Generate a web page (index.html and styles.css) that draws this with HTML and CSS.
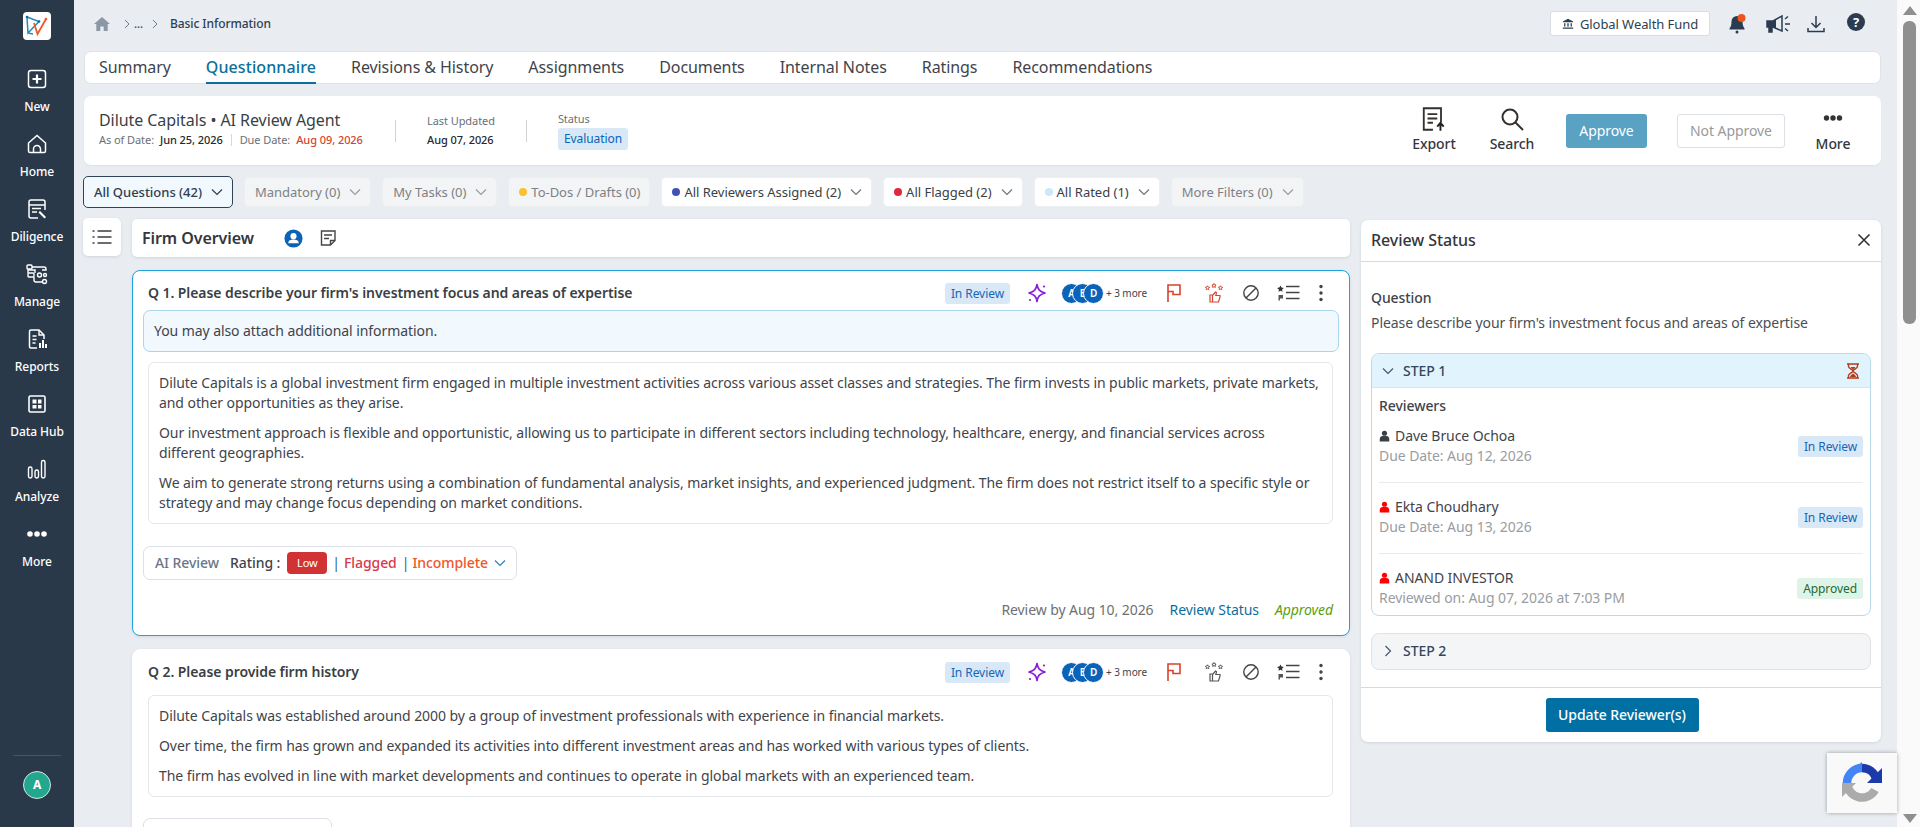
FILE: index.html
```html
<!DOCTYPE html>
<html lang="en">
<head>
<meta charset="utf-8">
<title>Basic Information</title>
<link rel="stylesheet" href="styles.css">
</head>
<body>
<svg class="defs" aria-hidden="true">
  <symbol id="chev" viewBox="0 0 12 8"><path d="M1 1.500l5 5 5-5" fill="none" stroke="currentColor" stroke-width="1.200"/></symbol>
  <symbol id="spark" viewBox="0 0 22 22"><path d="M11 2.500c.8 5 2.600 7 8 8.500-5.400 1.500-7.200 3.500-8 8.500-.8-5-2.600-7-8-8.500 5.400-1.500 7.200-3.500 8-8.500z" fill="none" stroke="#8a1fd6" stroke-width="1.700" stroke-linejoin="round"/><circle cx="18" cy="4.500" r="1.100" fill="#8a1fd6"/><circle cx="4" cy="18" r="1.100" fill="#8a1fd6"/></symbol>
  <symbol id="flag" viewBox="0 0 22 22"><path d="M5 20V3h12v9.500h-7V9.500H5" fill="none" stroke="currentColor" stroke-width="1.600"/></symbol>
  <symbol id="thumb" viewBox="0 0 22 22"><path d="M7 13h2.500v7H7zM9.500 13.500l3-3.500 1 .8-.7 2.700h4.200v1.500l-1.500 5h-6" fill="none" stroke="currentColor" stroke-width="1.200"/><path d="M4.500 3.800l.7 1.300 1.400.2-1 1 .2 1.400-1.300-.7-1.300.7.200-1.400-1-1 1.400-.2zM11 1.500l.7 1.300 1.400.2-1 1 .2 1.400-1.300-.7-1.300.7.200-1.400-1-1 1.400-.2zM17.500 3.800l.7 1.300 1.400.2-1 1 .2 1.400-1.300-.7-1.300.7.200-1.400-1-1 1.400-.2z" fill="none" stroke="currentColor" stroke-width="1"/></symbol>
  <symbol id="ban" viewBox="0 0 22 22"><circle cx="11" cy="11" r="7.200" fill="none" stroke="#444" stroke-width="1.400"/><path d="M6 16L16 6" stroke="#444" stroke-width="1.400"/></symbol>
  <symbol id="slist" viewBox="0 0 23 20"><path d="M3.500 2.500l1 2.100 2.300.3-1.700 1.600.4 2.300-2-1.100-2 1.100.4-2.300L0 4.900l2.300-.3z" fill="#333"/><path d="M1.500 12h4.500v3.500H3v2H1.500z" fill="#555"/><path d="M9 3.500h13.500M9 9.500h13.500M9 15.500h13.500" stroke="#444" stroke-width="1.500"/></symbol>
  <symbol id="dots" viewBox="0 0 22 22"><circle cx="11" cy="4.500" r="1.700" fill="#444"/><circle cx="11" cy="11" r="1.700" fill="#444"/><circle cx="11" cy="17.500" r="1.700" fill="#444"/></symbol>
  <symbol id="person" viewBox="0 0 12 12"><circle cx="6" cy="3" r="2.800" fill="currentColor"/><path d="M.8 12V9.300C.8 7.300 2.300 6 4 6h4c1.700 0 3.200 1.300 3.200 3.300V12z" fill="currentColor"/></symbol>
</svg>

<aside class="sidebar">
  <div class="logo">
    <svg width="28" height="28" viewBox="0 0 28 28"><path d="M4 5l12 4.500L5 21zM4 5l1 16 5 1" fill="none" stroke="#1f8fb8" stroke-width="1.500"/><path d="M11 11l3.500 11L23 7" fill="none" stroke="#ee5a2b" stroke-width="1.800"/><circle cx="4" cy="5" r="1.300" fill="#1d5fa8"/><circle cx="16" cy="9.500" r="1.300" fill="#1d5fa8"/><circle cx="23" cy="7" r="1.300" fill="#ee5a2b"/></svg>
  </div>
  <nav class="nav">
    <a class="nav-item"><svg class="nav-icon" viewBox="0 0 24 24"><rect x="3.500" y="3.500" width="17" height="17" rx="2.500" fill="none" stroke="#fff" stroke-width="1.500"/><path d="M12 7.500v9M7.500 12h9" stroke="#fff" stroke-width="2.200"/></svg><span>New</span></a>
    <a class="nav-item"><svg class="nav-icon" viewBox="0 0 24 24"><path d="M3.500 11l8.500-7.500 8.500 7.500v8a1.500 1.500 0 0 1-1.500 1.500H5A1.500 1.500 0 0 1 3.500 19z" fill="none" stroke="#fff" stroke-width="1.500"/><path d="M8.500 20.500V17a3.500 3.500 0 0 1 7 0v3.500" fill="none" stroke="#fff" stroke-width="1.500"/></svg><span>Home</span></a>
    <a class="nav-item"><svg class="nav-icon" viewBox="0 0 24 24"><path d="M13 21H6a2 2 0 0 1-2-2V5a2 2 0 0 1 2-2h12a2 2 0 0 1 2 2v8" fill="none" stroke="#fff" stroke-width="1.500"/><path d="M4 8h16M7 11.500h9M7 15h5" stroke="#fff" stroke-width="1.500"/><path d="M15 14l6 6-1.500 1.500-6-6z" fill="#fff"/></svg><span>Diligence</span></a>
    <a class="nav-item"><svg class="nav-icon" viewBox="0 0 24 24"><g fill="none" stroke="#fff" stroke-width="1.400"><rect x="2" y="3" width="5" height="4" rx="1"/><path d="M7 5h12a2 2 0 0 1 2 2v1H17"/><rect x="3" y="11" width="6" height="4" rx="1"/><circle cx="14.500" cy="13" r="2"/><circle cx="20" cy="13" r="1.500"/><path d="M3 11V8h7v3M9 15v3a2 2 0 0 0 2 2h6"/><circle cx="19.500" cy="19.500" r="2"/></g></svg><span>Manage</span></a>
    <a class="nav-item"><svg class="nav-icon" viewBox="0 0 24 24"><path d="M12 21H6a1.500 1.500 0 0 1-1.500-1.500v-15A1.500 1.500 0 0 1 6 3h8l5 5v4" fill="none" stroke="#fff" stroke-width="1.500"/><path d="M14 3v5h5M7.500 9h4M7.500 12.500h4M7.500 16h3" fill="none" stroke="#fff" stroke-width="1.400"/><path d="M14 16h2v5h-2zM17 13h2v8h-2zM20 17h2v4h-2z" fill="#fff"/></svg><span>Reports</span></a>
    <a class="nav-item"><svg class="nav-icon" viewBox="0 0 24 24"><rect x="4" y="4" width="16" height="16" rx="1.500" fill="none" stroke="#fff" stroke-width="1.600"/><path d="M7.500 7.500h4v4h-4zM13 7.500h3.500v4H13zM7.500 13h4v3.500h-4zM13 13h3.500v3.500H13z" fill="#fff"/></svg><span>Data Hub</span></a>
    <a class="nav-item"><svg class="nav-icon" viewBox="0 0 24 24"><g fill="none" stroke="#fff" stroke-width="1.400"><rect x="3.500" y="10" width="3.500" height="11" rx="1.700"/><rect x="10" y="13" width="3.500" height="8" rx="1.700"/><rect x="16.500" y="3.500" width="3.500" height="17.500" rx="1.700"/></g></svg><span>Analyze</span></a>
    <a class="nav-item"><svg class="nav-icon" viewBox="0 0 24 24"><circle cx="5" cy="12" r="2.800" fill="#fff"/><circle cx="12" cy="12" r="2.800" fill="#fff"/><circle cx="19" cy="12" r="2.800" fill="#fff"/></svg><span>More</span></a>
  </nav>
  <div class="side-foot"><div class="side-avatar">A</div></div>
</aside>

<div class="main">
  <header class="topbar">
    <div class="crumbs">
      <svg class="crumb-home" viewBox="0 0 16 14"><path d="M8 0l8 7h-2.300v7H9.700V9.500H6.300V14H2.300V7H0z" fill="#8b97a6"/></svg>
      <svg class="crumb-sep crumb-sep-1" viewBox="0 0 6 10"><path d="M1 1l4 4-4 4" fill="none" stroke="#6f7c8c" stroke-width="1"/></svg>
      <span class="crumb-dots">...</span>
      <svg class="crumb-sep crumb-sep-2" viewBox="0 0 6 10"><path d="M1 1l4 4-4 4" fill="none" stroke="#6f7c8c" stroke-width="1"/></svg>
      <span class="crumb-now">Basic Information</span>
    </div>
    <div class="top-actions">
      <div class="fund">
        <svg class="fund-icon" viewBox="0 0 14 14"><path d="M7 1l6 3v1H1V4zM2.500 6h1.500v4H2.500zM6.200 6h1.600v4H6.200zM10 6h1.500v4H10zM1 11h12v1.500H1z" fill="#2b3c50"/></svg>
        <span>Global Wealth Fund</span>
      </div>
      <span class="top-icon top-bell"><svg viewBox="0 0 22 22"><path d="M11 3a5.500 5.500 0 0 0-5.500 5.500c0 4-1 5.500-2 7v1h15v-1c-1-1.500-2-3-2-7A5.500 5.500 0 0 0 11 3z" fill="#2b3c50"/><circle cx="11" cy="19" r="1.500" fill="#2b3c50"/><circle cx="15.500" cy="5" r="4" fill="#f0541e"/></svg></span>
      <span class="top-icon top-mega"><svg viewBox="0 0 26 22"><path d="M2 8h6l9-5v15l-9-4H7v5H4v-5H2z" fill="none" stroke="#2b3c50" stroke-width="1.500"/><path d="M2 8h6v6H2zM4 14h3v5H4zM8 8l3-1.500v9L8 14z" fill="#2b3c50"/><path d="M20 6l3-2.500M20 11h5M20 15.500l3 2.500" stroke="#2b3c50" stroke-width="1.400"/></svg></span>
      <span class="top-icon"><svg viewBox="0 0 22 22"><path d="M11 3v11M6.500 10l4.500 4.500 4.500-4.500M3 15v3.500h16V15" fill="none" stroke="#2b3c50" stroke-width="1.500"/></svg></span>
      <span class="top-icon help">?</span>
    </div>
  </header>

  <div class="tabs">
    <a class="tab">Summary</a>
    <a class="tab tab-on">Questionnaire</a>
    <a class="tab">Revisions &amp; History</a>
    <a class="tab">Assignments</a>
    <a class="tab">Documents</a>
    <a class="tab">Internal Notes</a>
    <a class="tab">Ratings</a>
    <a class="tab">Recommendations</a>
  </div>

  <section class="summary">
    <div class="sum-title">
      <div class="sum-name">Dilute Capitals • AI Review Agent</div>
      <div class="sum-dates">
        <span class="lbl">As of Date:</span><b>Jun 25, 2026</b><i class="vbar"></i><span class="lbl">Due Date:</span><b class="due">Aug 09, 2026</b>
      </div>
    </div>
    <i class="vrule"></i>
    <div class="sum-col">
      <span class="lbl">Last Updated</span>
      <b>Aug 07, 2026</b>
    </div>
    <i class="vrule"></i>
    <div class="sum-col">
      <span class="lbl">Status</span>
      <span class="eval">Evaluation</span>
    </div>
    <div class="sum-actions">
      <a class="act act-export"><svg viewBox="0 0 26 26"><path d="M12 23H3.500V3h16v13" fill="none" stroke="#33302d" stroke-width="1.700"/><path d="M7 8.500h9M7 12.500h9M7 16.500h5" stroke="#33302d" stroke-width="1.700"/><path d="M19 24v-6.500M16 20l3-3.500 3 3.500" fill="none" stroke="#222" stroke-width="1.800"/></svg><span>Export</span></a>
      <a class="act act-search"><svg viewBox="0 0 26 26"><circle cx="11" cy="10" r="7.500" fill="none" stroke="#33302d" stroke-width="2"/><path d="M16.500 15.500l7.500 7.500" stroke="#33302d" stroke-width="2"/></svg><span>Search</span></a>
      <button class="btn-approve">Approve</button>
      <button class="btn-not">Not Approve</button>
      <a class="act act-more"><svg viewBox="0 0 26 26"><circle cx="6.500" cy="11" r="2.700" fill="#333"/><circle cx="13" cy="11" r="2.700" fill="#333"/><circle cx="19.500" cy="11" r="2.700" fill="#333"/></svg><span>More</span></a>
    </div>
  </section>

  <div class="filters">
    <button class="flt flt-main">All Questions (42)<svg class="chev"><use href="#chev"/></svg></button>
    <button class="flt flt-off">Mandatory (0)<svg class="chev"><use href="#chev"/></svg></button>
    <button class="flt flt-off">My Tasks (0)<svg class="chev"><use href="#chev"/></svg></button>
    <button class="flt flt-off"><i class="dot dot-y"></i>To-Dos / Drafts (0)</button>
    <button class="flt"><i class="dot dot-b"></i>All Reviewers Assigned (2)<svg class="chev"><use href="#chev"/></svg></button>
    <button class="flt"><i class="dot dot-r"></i>All Flagged (2)<svg class="chev"><use href="#chev"/></svg></button>
    <button class="flt"><i class="dot dot-c"></i>All Rated (1)<svg class="chev"><use href="#chev"/></svg></button>
    <button class="flt flt-off">More Filters (0)<svg class="chev"><use href="#chev"/></svg></button>
  </div>

  <div class="content">
    <button class="toc"><svg viewBox="0 0 20 16" width="20" height="16"><path d="M5.500 2h14M5.500 8h14M5.500 14h14" stroke="#3c3c3c" stroke-width="1.500"/><path d="M.500 2h2M.500 8h2M.500 14h2" stroke="#3c3c3c" stroke-width="1.500"/></svg></button>

    <div class="questions">
      <div class="section-bar">
        <h2>Firm Overview</h2>
        <svg class="sec-user" viewBox="0 0 20 20"><circle cx="10" cy="10" r="9.500" fill="#0a63b8"/><circle cx="10" cy="7.500" r="3.200" fill="#fff"/><path d="M4.500 15c0-3 2.500-4 5.500-4s5.500 1 5.500 4z" fill="#fff"/></svg>
        <svg class="sec-note" viewBox="0 0 18 18"><path d="M11.500 16H2.500V2h13.500v9.500z" fill="none" stroke="#444" stroke-width="1.400"/><path d="M11.500 16v-4.500H16M5 6h8M5 9.500h5" fill="none" stroke="#444" stroke-width="1.400"/></svg>
      </div>

      <article class="q q-active">
        <div class="q-head">
          <h3>Q 1. Please describe your firm's investment focus and areas of expertise</h3>
          <div class="q-tools">
            <span class="badge">In Review</span>
            <svg class="ti ti-star"><use href="#spark"/></svg>
            <div class="avatars"><span>A</span><span>E</span><span>D</span></div>
            <span class="more3">+ 3 more</span>
            <svg class="ti ti-red ti-flag"><use href="#flag"/></svg>
            <svg class="ti ti-red ti-th"><use href="#thumb"/></svg>
            <svg class="ti ti-ban"><use href="#ban"/></svg>
            <svg class="ti ti-list"><use href="#slist"/></svg>
            <svg class="ti ti-dots"><use href="#dots"/></svg>
          </div>
        </div>
        <div class="notice">You may also attach additional information.</div>
        <div class="answer">
          <p>Dilute Capitals is a global investment firm engaged in multiple investment activities across various asset classes and strategies. The firm invests in public markets, private markets, and other opportunities as they arise.</p>
          <p>Our investment approach is flexible and opportunistic, allowing us to participate in different sectors including technology, healthcare, energy, and financial services across different geographies.</p>
          <p>We aim to generate strong returns using a combination of fundamental analysis, market insights, and experienced judgment. The firm does not restrict itself to a specific style or strategy and may change focus depending on market conditions.</p>
        </div>
        <div class="ai-chip">
          <span class="ai-l">AI Review</span>
          <span class="ai-r">Rating :</span>
          <span class="low">Low</span>
          <span class="ai-sep">|</span>
          <span class="ai-flag">Flagged</span>
          <span class="ai-sep">|</span>
          <span class="ai-inc">Incomplete</span>
          <svg class="chev chev-blue"><use href="#chev"/></svg>
        </div>
        <div class="q-foot">
          <span class="by">Review by Aug 10, 2026</span>
          <a class="rs">Review Status</a>
          <em class="ok">Approved</em>
        </div>
      </article>

      <article class="q">
        <div class="q-head q-head-2">
          <h3>Q 2. Please provide firm history</h3>
          <div class="q-tools">
            <span class="badge">In Review</span>
            <svg class="ti ti-star"><use href="#spark"/></svg>
            <div class="avatars"><span>A</span><span>E</span><span>D</span></div>
            <span class="more3">+ 3 more</span>
            <svg class="ti ti-red ti-flag"><use href="#flag"/></svg>
            <svg class="ti ti-dark ti-th"><use href="#thumb"/></svg>
            <svg class="ti ti-ban"><use href="#ban"/></svg>
            <svg class="ti ti-list"><use href="#slist"/></svg>
            <svg class="ti ti-dots"><use href="#dots"/></svg>
          </div>
        </div>
        <div class="answer">
          <p>Dilute Capitals was established around 2000 by a group of investment professionals with experience in financial markets.</p>
          <p>Over time, the firm has grown and expanded its activities into different investment areas and has worked with various types of clients.</p>
          <p>The firm has evolved in line with market developments and continues to operate in global markets with an experienced team.</p>
        </div>
        <div class="ai-stub"></div>
      </article>
    </div>

    <aside class="panel">
      <div class="panel-head">
        <h2>Review Status</h2>
        <svg class="close" viewBox="0 0 14 14"><path d="M1.500 1.500l11 11M12.500 1.500l-11 11" stroke="#333" stroke-width="1.600"/></svg>
      </div>
      <div class="panel-body">
        <div class="pq-label">Question</div>
        <div class="pq-text">Please describe your firm's investment focus and areas of expertise</div>
        <div class="step step-open">
          <div class="step-head">
            <svg class="step-chev"><use href="#chev"/></svg>
            <span>STEP 1</span>
            <svg class="hourglass" viewBox="0 0 14 16"><path d="M1 1h12M1 15h12M2.500 1v2.500c0 2 4.500 3 4.500 4.500s-4.500 2.500-4.500 4.500V15M11.500 1v2.500c0 2-4.500 3-4.500 4.500s4.500 2.500 4.500 4.500V15" fill="none" stroke="#b23c17" stroke-width="1.400"/><path d="M4.500 4h5L7 7zM4 14c0-1.500 2-2.500 3-3.500 1 1 3 2 3 3.500z" fill="#b23c17"/></svg>
          </div>
          <div class="step-body">
            <div class="rev-title">Reviewers</div>
            <div class="rev">
              <div class="rev-info">
                <div class="rev-name"><svg class="pin pin-dark"><use href="#person"/></svg>Dave Bruce Ochoa</div>
                <div class="rev-date">Due Date: Aug 12, 2026</div>
              </div>
              <span class="badge">In Review</span>
            </div>
            <div class="rev">
              <div class="rev-info">
                <div class="rev-name"><svg class="pin pin-red"><use href="#person"/></svg>Ekta Choudhary</div>
                <div class="rev-date">Due Date: Aug 13, 2026</div>
              </div>
              <span class="badge">In Review</span>
            </div>
            <div class="rev rev-last">
              <div class="rev-info">
                <div class="rev-name"><svg class="pin pin-red"><use href="#person"/></svg>ANAND INVESTOR</div>
                <div class="rev-date">Reviewed on: Aug 07, 2026 at 7:03 PM</div>
              </div>
              <span class="badge badge-ok">Approved</span>
            </div>
          </div>
        </div>
        <div class="step step-closed">
          <div class="step-head">
            <svg class="step-chev step-chev-r"><use href="#chev"/></svg>
            <span>STEP 2</span>
          </div>
        </div>
      </div>
      <div class="panel-foot"><button class="btn-update">Update Reviewer(s)</button></div>
    </aside>
  </div>
</div>

<div class="scrollbar">
  <i class="sb-up"></i>
  <i class="sb-thumb"></i>
  <i class="sb-down"></i>
</div>

<div class="recaptcha">
  <svg viewBox="0 0 44 44" width="44" height="44">
    <path d="M22 7a15 15 0 0 1 14 10" fill="none" stroke="#1c3aa9" stroke-width="8.500"/>
    <path d="M42 7v15H27z" fill="#1c3aa9"/>
    <path d="M22 7A15 15 0 0 0 7 22" fill="none" stroke="#4285f4" stroke-width="8.500"/>
    <path d="M22 1v9l-7-4z" fill="#4285f4"/>
    <path d="M7 22a15 15 0 0 0 28 7" fill="none" stroke="#ababab" stroke-width="8.500"/>
    <path d="M2 22h14L2 36z" fill="#ababab"/>
  </svg>
</div>
</body>
</html>
```

FILE: styles.css
```css
* { box-sizing: border-box; }
html, body { height: 100%; }
body {
  margin: 0;
  height: 100vh;
  overflow: hidden;
  display: flex;
  background: #e9edf2;
  color: #3a3f45;
  font: 14px/20px "Noto Sans", "Open Sans", sans-serif;
  letter-spacing: -.07px;
}
h2, h3, p { margin: 0; }
button { font: inherit; letter-spacing: inherit; cursor: pointer; }
i { font-style: normal; }
.defs { position: absolute; width: 0; height: 0; }

/* sidebar */
.sidebar {
  width: 74px;
  flex: none;
  background: #2a394a;
  display: flex;
  flex-direction: column;
  align-items: center;
  color: #fff;
}
.logo {
  width: 28px;
  height: 28px;
  margin-top: 12px;
  background: #fff;
  border-radius: 4px;
}
.logo svg { display: block; }
.nav { margin-top: 25px; display: flex; flex-direction: column; }
.nav-item {
  height: 65px;
  width: 74px;
  display: flex;
  flex-direction: column;
  align-items: center;
  font-size: 12px;
  font-weight: 500;
  line-height: 16px;
  padding-top: 2px;
}
.nav-icon { width: 24px; height: 24px; margin-bottom: 8px; flex: none; }
.side-foot {
  margin-top: auto;
  width: 48px;
  height: 72px;
  border-top: 1px solid #44566b;
  padding-top: 15px;
  display: flex;
  justify-content: center;
}
.side-avatar {
  width: 28px;
  height: 28px;
  border-radius: 50%;
  border: 1px solid #cfe9e2;
  background: #23a88f;
  color: #fff;
  font-size: 12px;
  font-weight: 700;
  line-height: 26px;
  text-align: center;
}

/* main */
.main {
  flex: 1;
  min-width: 0;
  padding: 0 16px 0 10px;
  display: flex;
  flex-direction: column;
  overflow: hidden;
}
.topbar {
  height: 51px;
  flex: none;
  display: flex;
  align-items: flex-start;
  justify-content: space-between;
}
.crumbs { display: flex; align-items: center; height: 48px; padding-left: 10px; }
.crumb-home { width: 16px; height: 14px; }
.crumb-sep { width: 6px; height: 10px; }
.crumb-sep-1 { margin: 0 4px 0 14px; }
.crumb-sep-2 { margin: 0 0 0 9px; }
.crumb-dots { font-size: 11px; color: #4a5a6c; font-weight: 600; }
.crumb-now { font-size: 12px; color: #2f3e50; margin-left: 12px; font-weight: 500; }
.top-actions { display: flex; align-items: center; padding: 11px 16px 0 0; }
.fund {
  width: 160px;
  height: 25px;
  background: #fff;
  border: 1px solid #d8dde4;
  border-radius: 3px;
  display: flex;
  align-items: center;
  justify-content: center;
  gap: 6px;
  font-size: 13px;
  color: #2f3e50;
}
.fund-icon { width: 12px; height: 12px; }
.top-icon { width: 22px; height: 22px; margin-left: 15px; flex: none; }
.top-bell { margin-left: 16px; }
.top-mega { width: 26px; margin-left: 17px; }
.top-mega + .top-icon { margin-left: 14px; }
.top-icon svg { display: block; width: 100%; height: 100%; }
.help {
  width: 18px;
  height: 18px;
  margin-left: 20px;
  margin-top: -4px;
  border-radius: 50%;
  background: #2b3c50;
  color: #fff;
  font-size: 13px;
  line-height: 18px;
  font-weight: 700;
  text-align: center;
}

.tabs {
  height: 33px;
  flex: none;
  background: #fff;
  border: 1px solid #dfe3e8;
  border-radius: 7px;
  padding: 0 14px;
  display: flex;
  gap: 35px;
}
.tab { font-size: 16px; line-height: 30px; height: 32px; color: #3f444b; letter-spacing: -.08px; }
.tab-on {
  color: #0b6f9c;
  font-weight: 500;
  letter-spacing: .1px;
  border-bottom: 2px solid #0b6f9c;
}

.summary {
  height: 69px;
  flex: none;
  margin-top: 12px;
  background: #fff;
  border-radius: 7px;
  padding: 0 15px;
  display: flex;
  align-items: center;
  box-shadow: 0 1px 2px rgba(40, 50, 60, .06);
}
.sum-title { width: 296px; }
.sum-name { font-size: 16px; line-height: 22px; color: #3a3f45; margin-top: -5px; }
.sum-dates { font-size: 11px; line-height: 16px; display: flex; align-items: center; margin-top: 1px; }
.lbl { color: #6a7078; }
.sum-dates b { color: #25282c; font-weight: 500; margin-left: 6px; }
.sum-dates b.due { color: #d8432c; }
.vbar { width: 1px; height: 12px; background: #d5d8dc; margin: 0 8px; }
.vrule { width: 1px; height: 22px; background: #cfd3d8; flex: none; }
.sum-col { display: flex; flex-direction: column; font-size: 11px; line-height: 16px; margin: 0 31px; }
.sum-col b { color: #25282c; font-weight: 500; margin-top: 3px; }
.eval {
  align-self: flex-start;
  margin-top: 1px;
  padding: 2px 6px;
  background: #d9e8f6;
  border-radius: 3px;
  color: #0a63b8;
  font-size: 12px;
  line-height: 18px;
}
.sum-actions { margin-left: auto; display: flex; align-items: center; }
.act {
  display: flex;
  flex-direction: column;
  align-items: center;
  font-size: 14px;
  font-weight: 500;
  line-height: 18px;
  color: #33373c;
}
.act svg { width: 26px; height: 26px; margin-bottom: 2px; }
.act-export { width: 46px; margin-top: -1px; }
.act-export svg { width: 28px; height: 28px; margin: -2px 0 2px; }
.act-search { width: 46px; margin: -1px 0 0 32px; }
.btn-approve {
  width: 81px;
  height: 34px;
  margin-left: 31px;
  border: 0;
  border-radius: 3px;
  background: #5aa2c4;
  color: #fff;
  font-size: 14px;
}
.btn-not {
  width: 108px;
  height: 34px;
  margin-left: 30px;
  background: #fff;
  border: 1px solid #dcdfe3;
  border-radius: 3px;
  color: #9a9a9a;
  font-size: 14px;
}
.act-more { width: 40px; margin: -1px 13px 0 28px; }

.filters { margin: 11px 0 0 -1px; display: flex; align-items: center; gap: 11px; flex: none; height: 32px; }
.flt {
  height: 30px;
  padding: 0 9px 0 10px;
  border: 1px solid #eef0f3;
  border-radius: 5px;
  background: #fff;
  color: #3a3f45;
  font-size: 13px;
  letter-spacing: -.02px;
  display: flex;
  align-items: center;
  white-space: nowrap;
}
.flt-main {
  height: 32px;
  background: #f1f8fe;
  border-color: #2f4257;
  color: #2f3e50;
  font-weight: 500;
}
.flt-off { background: #f3f4f5; color: #7d8186; border-color: #eceef0; }
.chev { width: 12px; height: 8px; margin-left: 9px; flex: none; color: #6f7378; }
.flt-main .chev { color: #2f3e50; }
.flt-off .chev { color: #9a9da1; }
.dot { width: 8px; height: 8px; border-radius: 50%; margin-right: 4px; flex: none; }
.dot-y { background: #fbc02d; }
.dot-b { background: #3f51b5; }
.dot-r { background: #e3263f; }
.dot-c { background: #c9e9fb; }

/* content */
.content { margin: 10px 0 0 -1px; flex: 1; min-height: 0; display: flex; align-items: flex-start; gap: 11px; }
.toc {
  width: 38px;
  height: 38px;
  flex: none;
  padding: 0;
  border: 0;
  border-radius: 5px;
  background: #fff;
  display: flex;
  align-items: center;
  justify-content: center;
  box-shadow: 0 1px 3px rgba(40, 50, 60, .12);
}
.questions { flex: 1; min-width: 0; display: flex; flex-direction: column; gap: 13px; padding-top: 1px; }
.section-bar {
  height: 38px;
  background: #fff;
  border-radius: 5px;
  display: flex;
  align-items: center;
  padding-left: 10px;
  box-shadow: 0 1px 3px rgba(40, 50, 60, .12);
}
.section-bar h2 { font-size: 16px; font-weight: 600; color: #33373c; width: 142px; }
.sec-user { width: 19px; height: 19px; }
.sec-note { width: 18px; height: 18px; margin-left: 16px; }

.q {
  background: #fff;
  border: 1px solid #fff;
  border-radius: 8px;
  box-shadow: 0 1px 3px rgba(40, 50, 60, .10);
  flex: none;
}
.q-active { border-color: #1ea3dc; }
.q-head {
  height: 39px;
  padding: 12px 17px 0 15px;
  display: flex;
  align-items: flex-start;
  justify-content: space-between;
}
.q-head-2 { height: 45px; padding-top: 12px; }
.q-head h3 { font-size: 14px; font-weight: 600; color: #3a3f45; line-height: 20px; }
.q-tools { display: flex; align-items: center; height: 20px; }
.badge {
  flex: none;
  height: 21px;
  padding: 0 6px;
  background: #d9e8f6;
  border-radius: 3px;
  color: #1567b8;
  font-size: 12px;
  line-height: 21px;
}
.ti { width: 22px; height: 22px; flex: none; margin-left: 15px; }
.ti-star { margin-left: 16px; }
.ti-red { color: #d8432c; }
.ti-dark { color: #555; }
.ti-th { margin-left: 18px; }
.ti-list { width: 23px; height: 20px; }
.ti-dots { margin-left: 10px; }
.avatars { display: flex; margin-left: 13px; }
.avatars span {
  width: 21px;
  height: 21px;
  border-radius: 50%;
  background: #0a63b8;
  border: 1px solid #fff;
  color: #fff;
  font-size: 10px;
  font-weight: 600;
  line-height: 19px;
  text-align: center;
  margin-left: -10px;
}
.avatars span:first-child { margin-left: 0; }
.more3 { font-size: 10px; color: #444; margin-left: 2px; width: 44px; white-space: nowrap; }
.ti-flag { margin-left: 13px; }

.notice {
  height: 42px;
  margin: 0 10px;
  padding: 0 10px;
  background: #f1f8fe;
  border: 1px solid #a8d6ec;
  border-radius: 7px;
  line-height: 40px;
  color: #3f444b;
}
.answer {
  margin: 10px 16px 0 15px;
  padding: 10px;
  border: 1px solid #e5e7ea;
  border-radius: 6px;
  color: #3f444b;
}
.answer p + p { margin-top: 10px; }
.q-head-2 + .answer { margin-top: 0; }
.ai-chip {
  display: inline-flex;
  align-items: center;
  height: 34px;
  margin: 22px 0 0 10px;
  padding: 0 10px 0 11px;
  border: 1px solid #dcdfe5;
  border-radius: 7px;
  white-space: nowrap;
}
.ai-l { color: #6b7686; font-weight: 500; }
.ai-r { color: #3f444b; font-weight: 500; margin-left: 11px; }
.low {
  width: 40px;
  height: 22px;
  margin-left: 7px;
  background: #d13335;
  border-radius: 4px;
  color: #fff;
  font-size: 11px;
  line-height: 22px;
  text-align: center;
}
.ai-sep { color: #2f5f8a; margin: 0 4px 0 5px; }
.ai-flag { color: #d93a4a; font-weight: 500; }
.ai-inc { color: #f0562a; font-weight: 500; margin-left: -1px; }
.chev-blue { color: #2b83b8; margin-left: 6px; }
.q-foot {
  display: flex;
  justify-content: flex-end;
  align-items: center;
  height: 20px;
  margin-top: 20px;
  margin-bottom: 15px;
  padding-right: 16px;
  font-size: 14px;
}
.by { color: #6d7175; }
.rs { color: #0b6f9c; margin-left: 16px; }
.ok { color: #5aa00a; margin-left: 16px; }
.ai-stub {
  width: 189px;
  height: 34px;
  margin: 21px 0 0 10px;
  border: 1px solid #dcdfe5;
  border-radius: 7px;
}

/* panel */
.panel {
  width: 520px;
  flex: none;
  margin-top: 2px;
  background: #fff;
  border-radius: 7px;
  box-shadow: 0 1px 3px rgba(40, 50, 60, .12);
}
.panel-head {
  height: 42px;
  border-bottom: 1px solid #d6d9dd;
  padding: 0 10px 2px;
  display: flex;
  align-items: center;
  justify-content: space-between;
}
.panel-head h2 { font-size: 16px; font-weight: 500; color: #33373c; }
.close { width: 14px; height: 14px; }
.panel-body { padding: 26px 10px 17px; }
.pq-label { font-weight: 500; color: #3f444b; }
.pq-text { margin-top: 5px; color: #4a4f55; font-size: 14px; }
.step { border-radius: 8px; }
.step-open { margin-top: 20px; border: 1px solid #b9dbe9; }
.step-closed { margin-top: 17px; background: #f4f5f7; border: 1px solid #dfe2e6; height: 37px; }
.step-head {
  height: 34px;
  padding: 0 10px;
  display: flex;
  align-items: center;
  font-weight: 500;
  color: #33475b;
  font-size: 14px;
}
.step-open .step-head { background: #e1f3fd; border-bottom: 1px solid #d6e6ef; border-radius: 7px 7px 0 0; }
.step-chev { width: 12px; height: 8px; margin-right: 9px; color: #44566b; }
.step-chev-r { transform: rotate(-90deg); }
.hourglass { width: 14px; height: 16px; margin-left: auto; }
.step-body { padding: 8px 7px 0; }
.rev-title { font-weight: 500; color: #3f444b; margin-bottom: -4px; }
.rev {
  display: flex;
  align-items: center;
  justify-content: space-between;
  padding: 14px 0 16px;
  border-bottom: 1px solid #e9ebee;
}
.rev-last { border-bottom: 0; padding-bottom: 7px; }
.rev-name { display: flex; align-items: center; color: #3f444b; }
.rev-date { color: #9a9da1; }
.pin { width: 11px; height: 12px; margin-right: 5px; }
.pin-dark { color: #3a3f45; }
.pin-red { color: #f00; }
.badge-ok { background: #dff3e6; color: #1c6b34; }
.panel-foot {
  height: 55px;
  border-top: 1px solid #d6d9dd;
  display: flex;
  justify-content: center;
  padding: 10px 0 0 2px;
}
.btn-update {
  width: 153px;
  height: 34px;
  background: #006fa3;
  border: 0;
  border-radius: 3px;
  color: #fff;
  font-size: 14px;
  font-weight: 500;
}

/* scrollbar */
.scrollbar {
  width: 23px;
  flex: none;
  background: #fafafa;
  display: flex;
  flex-direction: column;
  align-items: center;
  padding: 6px 0 4px 2px;
  position: relative;
}
.sb-up { width: 0; height: 0; border: 7px solid transparent; border-top: 0; border-bottom: 9px solid #8f8f8f; }
.sb-thumb { width: 13px; height: 303px; margin-top: 6px; background: #8f8f8f; border-radius: 6px; }
.sb-down { width: 0; height: 0; margin-top: auto; border: 7px solid transparent; border-bottom: 0; border-top: 9px solid #8f8f8f; }

/* recaptcha */
.recaptcha {
  position: absolute;
  right: 23px;
  top: 753px;
  width: 70px;
  height: 60px;
  background: #f9f9f9;
  box-shadow: 0 0 4px rgba(0, 0, 0, .35);
  padding: 8px 0 0 13px;
}
```
